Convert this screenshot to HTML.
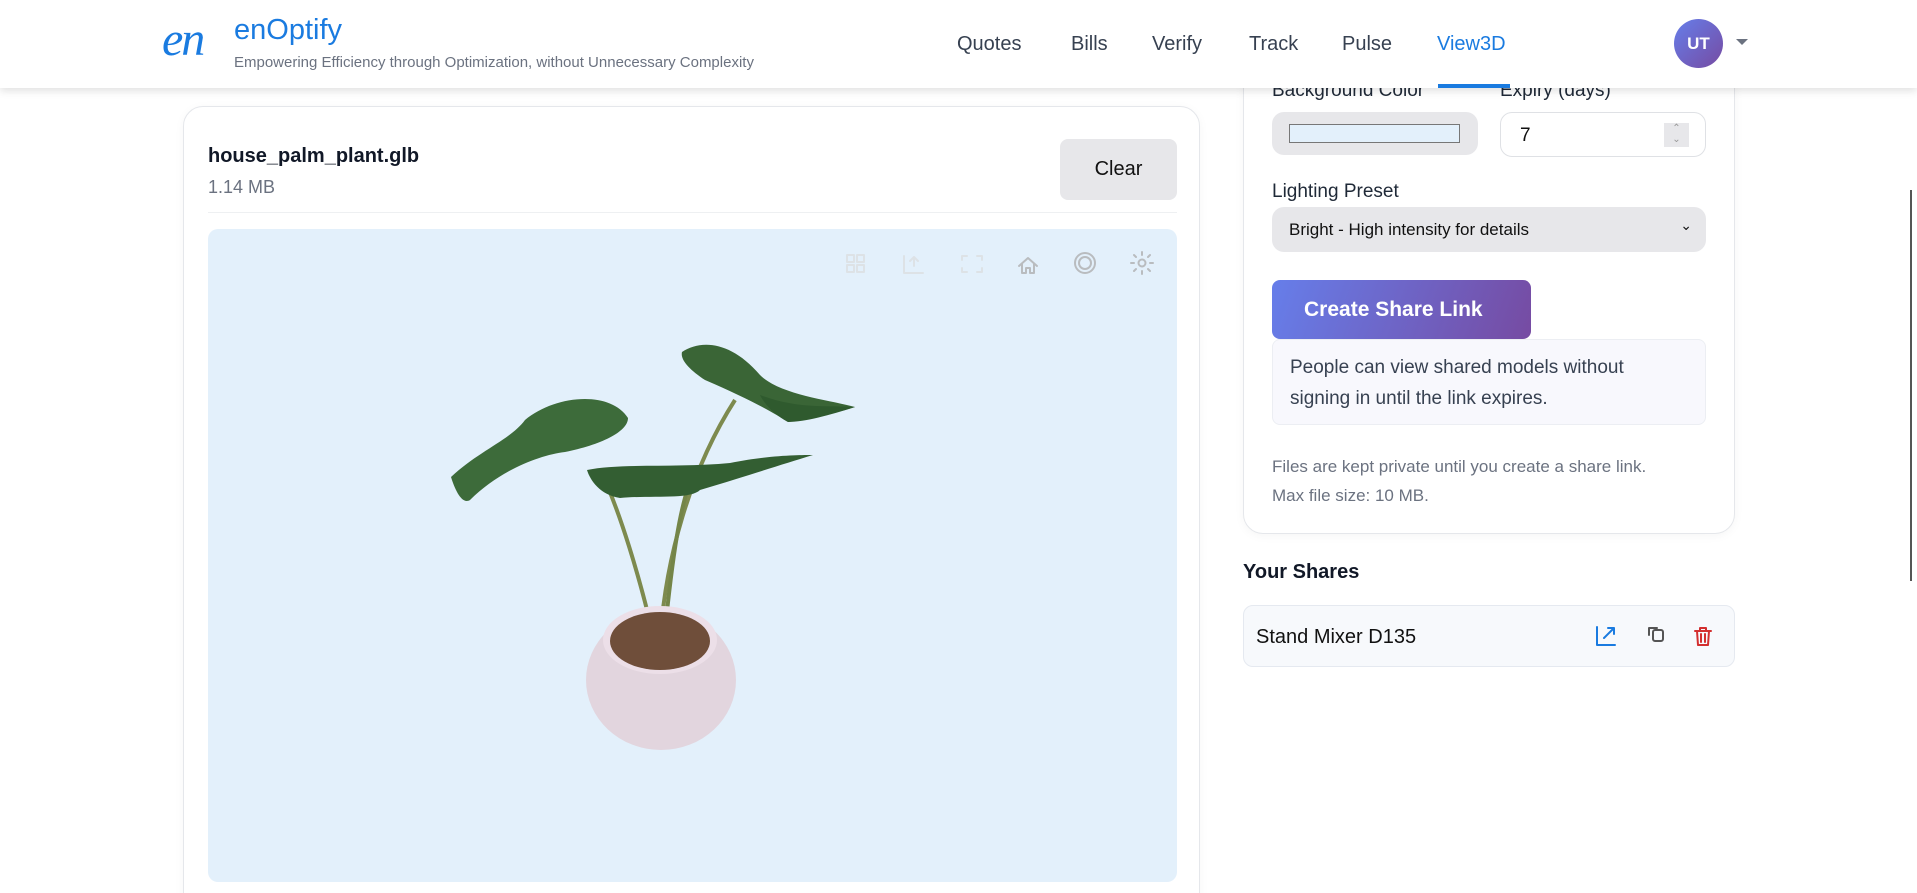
<!DOCTYPE html>
<html><head><meta charset="utf-8"><style>
*{box-sizing:border-box;margin:0;padding:0}
html,body{width:1917px;height:893px;overflow:hidden}
body{background:#fff;font-family:"Liberation Sans",sans-serif;position:relative;color:#1f2937}
.abs{position:absolute}
.hdr{left:0;top:0;width:1917px;height:88px;background:#fff;box-shadow:0 3px 8px rgba(0,0,0,.12);z-index:5}
.nav{top:33px;font-size:20px;color:#374151}
.card{border:1px solid #e5e7eb;border-radius:20px;background:#fff;box-shadow:0 2px 10px rgba(0,0,0,.04)}
.lbl{font-size:19px;color:#1f2937}
</style></head><body>
<div class="abs hdr">
  <div class="abs" style="left:162px;top:12px;font-family:'Liberation Serif',serif;font-style:italic;font-size:48px;color:#1a7be0;letter-spacing:-2px">en</div>
  <div class="abs" style="left:234px;top:14px;font-size:29px;color:#1a7be0">enOptify</div>
  <div class="abs" style="left:234px;top:54px;font-size:15px;color:#6b7280">Empowering Efficiency through Optimization, without Unnecessary Complexity</div>
  <div class="abs nav" style="left:957px">Quotes</div>
  <div class="abs nav" style="left:1071px">Bills</div>
  <div class="abs nav" style="left:1152px">Verify</div>
  <div class="abs nav" style="left:1249px">Track</div>
  <div class="abs nav" style="left:1342px">Pulse</div>
  <div class="abs nav" style="left:1437px;color:#1a7be0">View3D</div>
  <div class="abs" style="left:1438px;top:84px;width:72px;height:4px;background:#1a7be0"></div>
  <div class="abs" style="left:1674px;top:19px;width:49px;height:49px;border-radius:50%;background:linear-gradient(135deg,#667eea,#764ba2);color:#fff;font-size:17px;font-weight:bold;text-align:center;line-height:49px">UT</div>
  <div class="abs" style="left:1736px;top:39px;border-left:6px solid transparent;border-right:6px solid transparent;border-top:6px solid #6b7280"></div>
</div>

<div class="abs card" style="left:183px;top:106px;width:1017px;height:820px"></div>
<div class="abs" style="left:208px;top:145px;font-size:20px;font-weight:bold;color:#111827">house_palm_plant.glb</div>
<div class="abs" style="left:208px;top:177px;font-size:18px;color:#6b7280">1.14 MB</div>
<div class="abs" style="left:1060px;top:139px;width:117px;height:61px;background:#e7e7ea;border-radius:8px;font-size:20px;text-align:center;line-height:61px;color:#111">Clear</div>
<div class="abs" style="left:208px;top:212px;width:969px;height:1px;background:#eef0f2"></div>
<div class="abs" style="left:208px;top:229px;width:969px;height:653px;background:#e3f0fb;border-radius:10px"></div>
<svg class="abs" style="left:0;top:0" width="1917" height="893">
 <g fill="none" stroke-width="2" stroke-linecap="round" stroke-linejoin="round">
  <g stroke="#dde2e6"><rect x="847" y="255" width="7" height="7"/><rect x="857" y="255" width="7" height="7"/><rect x="847" y="265" width="7" height="7"/><rect x="857" y="265" width="7" height="7"/>
  <path d="M904 256v17h19M914 266v-9M910 261l4-4 4 4"/>
  <path d="M962 260v-4h5M977 256h5v4M982 268v4h-5M967 272h-5v-4"/></g>
  <g stroke="#b9bcbf"><path d="M1019 266l9-8 9 8M1022 264v9h4v-5h4v5h4v-9"/>
  <circle cx="1085" cy="263" r="10"/><circle cx="1085" cy="263" r="6"/>
  <circle cx="1142" cy="263" r="3.5"/><path d="M1142 252v3M1142 271v3M1131 263h3M1150 263h3M1134 255l2 2M1148 269l2 2M1134 271l2-2M1148 257l2-2"/></g>
 </g>
 <path d="M652 630C640 580 620 510 600 470" stroke="#7d8a4e" stroke-width="4" fill="none"/>
 <path d="M660 642C665 560 690 470 735 400" stroke="#7d8a4e" stroke-width="4" fill="none"/>
 <path d="M664 640C672 560 680 500 695 470" stroke="#748548" stroke-width="4" fill="none"/>
 <path d="M451 477C480 450 510 440 525 420C555 395 610 390 628 418C628 432 600 445 565 452C540 455 500 470 470 500C462 505 455 490 451 477Z" fill="#3d6b3a"/>
 <path d="M682 352C700 340 730 340 760 375C780 395 830 400 855 407C830 415 800 420 788 422C770 410 740 395 705 380C690 370 680 360 682 352Z" fill="#3a6536"/>
 <path d="M587 470C620 463 680 468 730 463C770 455 800 455 813 455C780 465 750 475 700 490C690 500 650 495 620 498C600 495 590 480 587 470Z" fill="#335e32"/>
 <path d="M760 395C800 410 830 405 855 407C830 415 805 422 788 422C775 415 765 405 760 395Z" fill="#2f5a2e"/>
 <ellipse cx="661" cy="680" rx="75" ry="70" fill="#e2d5de"/>
 <ellipse cx="660" cy="640" rx="57" ry="34" fill="#ecdfe8"/>
 <ellipse cx="660" cy="641" rx="50" ry="29" fill="#6f4e3a"/>
</svg>

<div class="abs card" style="left:1243px;top:40px;width:492px;height:494px"></div>
<div class="abs lbl" style="left:1272px;top:80px;z-index:1">Background Color</div>
<div class="abs lbl" style="left:1500px;top:80px;z-index:1">Expiry (days)</div>
<div class="abs" style="left:1272px;top:112px;width:206px;height:43px;background:#e7e7ea;border-radius:12px"></div>
<div class="abs" style="left:1289px;top:124px;width:171px;height:19px;background:#e3f0fb;border:1px solid #777"></div>
<div class="abs" style="left:1500px;top:112px;width:206px;height:45px;border:1px solid #dfe1e5;border-radius:12px"></div>
<div class="abs" style="left:1520px;top:125px;font-size:19px;color:#111">7</div>
<div class="abs" style="left:1664px;top:123px;width:25px;height:24px;background:#e7e7ea;color:#999;font-size:10px;text-align:center;line-height:11px">⌃<br>⌄</div>
<div class="abs lbl" style="left:1272px;top:181px">Lighting Preset</div>
<div class="abs" style="left:1272px;top:207px;width:434px;height:45px;background:#e7e7ea;border-radius:12px;font-size:17px;color:#111;padding:13px 0 0 17px">Bright - High intensity for details<span style="position:absolute;right:14px;top:10px;font-size:14px">⌄</span></div>
<div class="abs" style="left:1272px;top:280px;width:259px;height:59px;border-radius:8px;background:linear-gradient(110deg,#667eea,#764ba2);color:#fff;font-weight:bold;font-size:21px;padding:18px 0 0 32px">Create Share Link</div>
<div class="abs" style="left:1272px;top:339px;width:434px;height:86px;background:#f8f8fd;border:1px solid #eceef3;border-radius:8px;font-size:19px;line-height:31px;color:#374151;padding:12px 0 0 17px">People can view shared models without<br>signing in until the link expires.</div>
<div class="abs" style="left:1272px;top:452px;font-size:17px;line-height:29px;color:#6b7280">Files are kept private until you create a share link.<br>Max file size: 10 MB.</div>
<div class="abs" style="left:1243px;top:561px;font-size:20px;font-weight:bold;color:#111827">Your Shares</div>
<div class="abs" style="left:1243px;top:605px;width:492px;height:62px;background:#f7f9fc;border:1px solid #e5e9f0;border-radius:10px"></div>
<div class="abs" style="left:1256px;top:626px;font-size:20px;color:#111">Stand Mixer D135</div>
<svg class="abs" style="left:0;top:0" width="1917" height="893" fill="none" stroke-width="2" stroke-linecap="round" stroke-linejoin="round">
 <path d="M1597 627v18h18M1604 638l10-10M1608 628h6v6" stroke="#1a7be0"/>
 <rect x="1653" y="630" width="10" height="11" rx="2" stroke="#555"/><path d="M1649 635v-7h8" stroke="#555"/>
 <path d="M1695 631h16M1700 631v-3h6v3M1697 631l1 14h10l1-14M1701 634v8M1705 634v8" stroke="#d32f2f"/>
</svg>
<div class="abs" style="left:1910px;top:190px;width:2px;height:391px;background:#555"></div>
</body></html>
